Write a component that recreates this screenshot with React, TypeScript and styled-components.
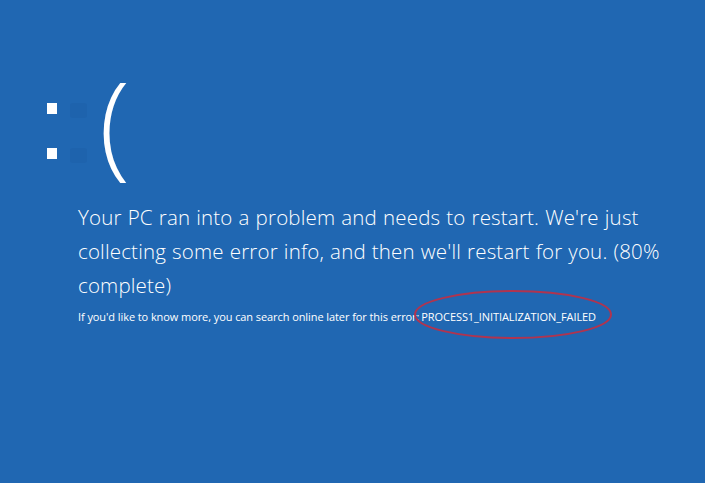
import React from "react";
import styled, { createGlobalStyle } from "styled-components";

const Global = createGlobalStyle`
  html, body { margin: 0; padding: 0; }
  body { background: #2067b2; width: 705px; height: 483px; overflow: hidden; }
`;

const Screen = styled.div`
  width: 705px;
  height: 483px;
  background: #2067b2;
  box-sizing: border-box;
  padding: 82px 0 0 47px;
  font-family: "Open Sans", "Noto Sans", sans-serif;
  color: #ffffff;
  display: flex;
  flex-direction: column;
`;

const Face = styled.div`
  display: flex;
  align-items: flex-start;
  height: 100px;
`;

const Colon = styled.div`
  display: flex;
  flex-direction: column;
  gap: 34px;
  margin-top: 21px;
`;

const Dot = styled.span<{ $ghost?: boolean }>`
  display: block;
  width: ${(p) => (p.$ghost ? 17 : 10)}px;
  height: ${(p) => (p.$ghost ? 15 : 11)}px;
  background: ${(p) => (p.$ghost ? "#1e63ad" : "#ffffff")};
  border-radius: ${(p) => (p.$ghost ? 3 : 0)}px;
`;

const GhostColon = styled(Colon)`
  gap: 30px;
  margin-left: 13px;
`;

const Paren = styled.span`
  font-size: 114px;
  font-weight: 300;
  line-height: 100px;
  margin-left: 12px;
  margin-top: -11px;
`;

const Message = styled.p`
  margin: 18px 0 0 31px;
  width: 610px;
  font-size: 20.5px;
  font-weight: 300;
  line-height: 34px;
  letter-spacing: 0.18px;
  word-spacing: 0.5px;
`;

const Detail = styled.p`
  margin: 8px 0 0 31px;
  font-size: 11px;
  font-weight: 400;
  line-height: 14px;
  letter-spacing: -0.08px;
`;

const Code = styled.span`
  position: relative;
  display: inline-block;
  margin-left: 2px;
`;

const Ring = styled.svg`
  position: absolute;
  left: -8px;
  top: -21px;
  width: 200px;
  height: 51px;
  overflow: visible;
  pointer-events: none;
`;

export default function App() {
  return (
    <>
      <Global />
      <Screen>
        <Face>
          <Colon>
            <Dot />
            <Dot />
          </Colon>
          <GhostColon>
            <Dot $ghost />
            <Dot $ghost />
          </GhostColon>
          <Paren>(</Paren>
        </Face>
        <Message>
          Your PC ran into a problem and needs to restart. We're just collecting some error info, and then we'll restart
          for you. (80% complete)
        </Message>
        <Detail>
          If you'd like to know more, you can search online later for this error:
          <Code>
            PROCESS1_INITIALIZATION_FAILED
            <Ring viewBox="0 0 200 51">
              <ellipse cx="100" cy="25.5" rx="98" ry="23.5" fill="none" stroke="#b0344f" strokeWidth="2" />
            </Ring>
          </Code>
        </Detail>
      </Screen>
    </>
  );
}
